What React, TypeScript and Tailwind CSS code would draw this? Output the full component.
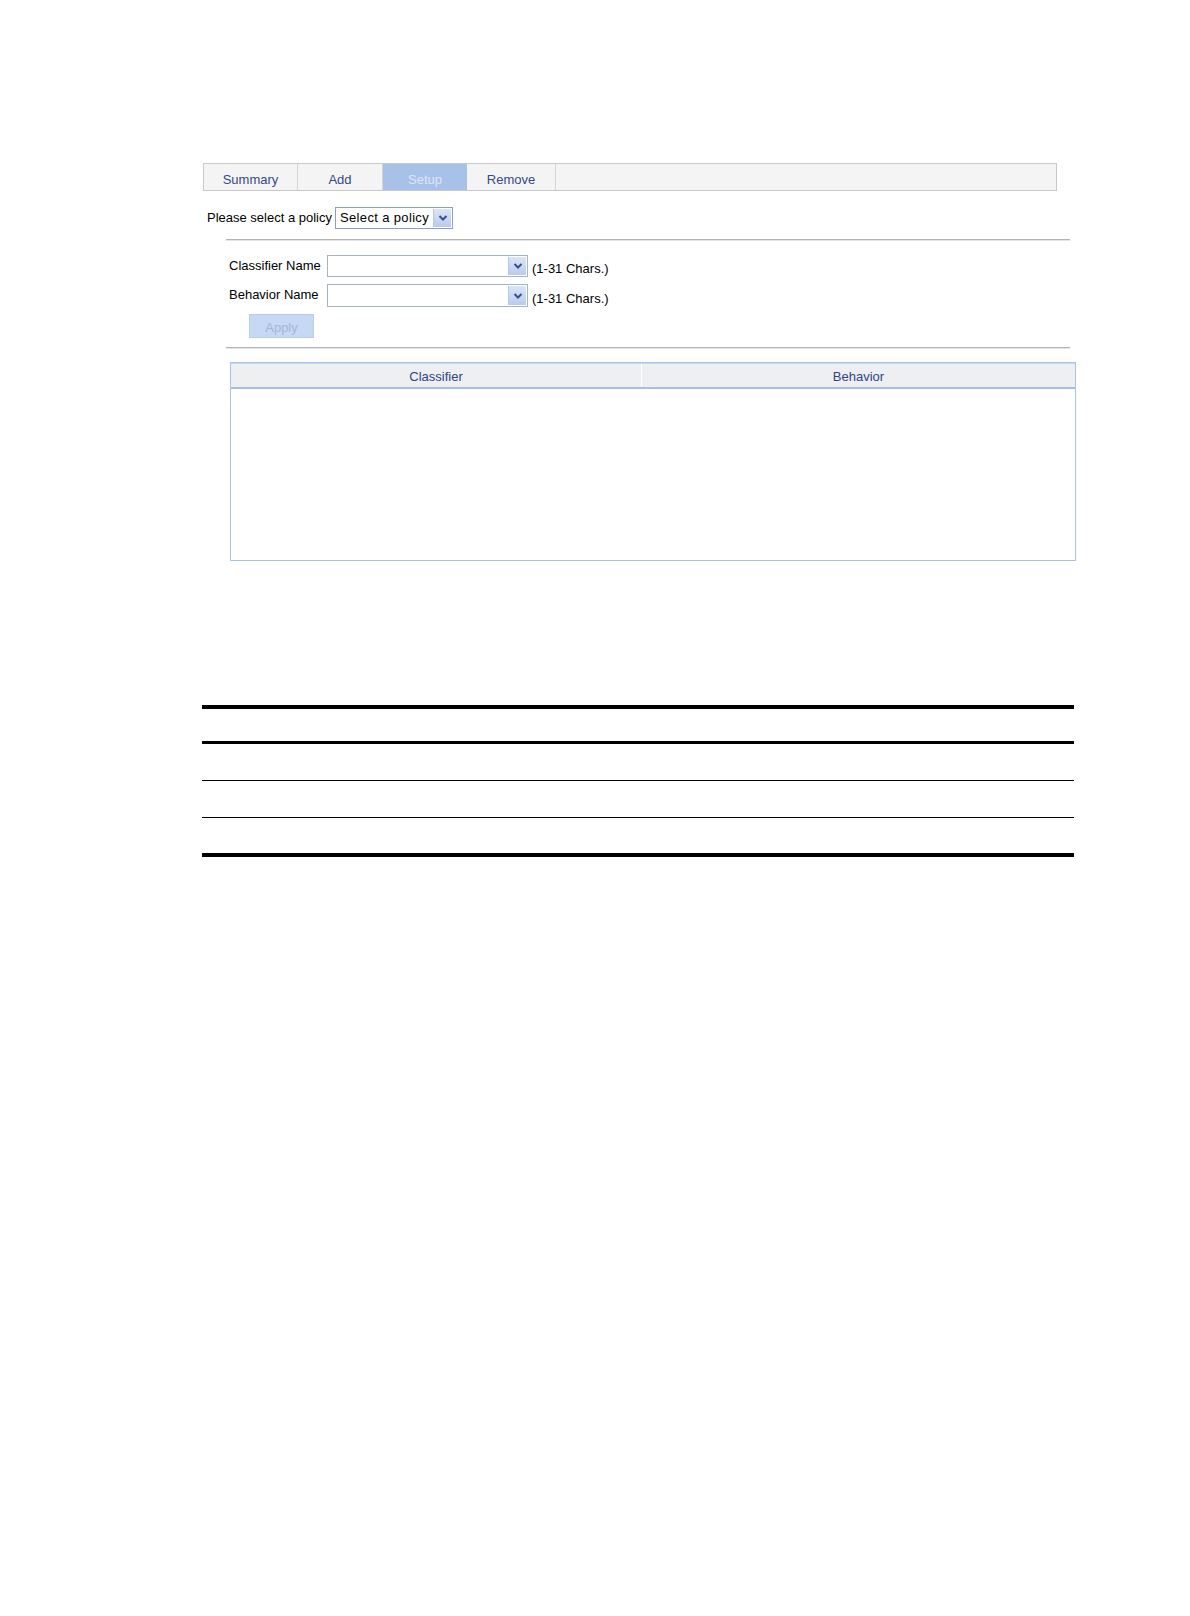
import React from "react";

function DropBtn() {
  return (
    <div className="w-[18px] h-full flex items-center justify-center bg-gradient-to-b from-[#dbe5f6] to-[#b9cbec] border-l border-[#b5c7e6]">
      <svg width="10" height="8" viewBox="0 0 10 8">
        <path d="M1.5 2 L5 5.5 L8.5 2" fill="none" stroke="#34508f" strokeWidth="2" />
      </svg>
    </div>
  );
}

export default function App() {
  const font = { fontFamily: '"Liberation Sans", Arial, sans-serif' };
  return (
    <div className="w-[1190px] h-[1616px] bg-white text-[13px] text-black" style={font}>
      <div className="pt-[163px] pl-[203px]">
        {/* Tab bar */}
        <div className="w-[854px] h-[28px] border border-[#c9c9c9] bg-[#f4f4f4] flex text-[#34498a] whitespace-nowrap">
          <div className="w-[94px] h-full border-r border-[#d4d4d4] flex items-end justify-center pb-[1px]">Summary</div>
          <div className="w-[85px] h-full border-r border-[#d4d4d4] flex items-end justify-center pb-[1px]">Add</div>
          <div className="w-[84px] h-full bg-[#a8c1e8] text-[#dde7f6] flex items-end justify-center pb-[1px]">Setup</div>
          <div className="w-[89px] h-full border-r border-[#d4d4d4] flex items-end justify-center pb-[1px]">Remove</div>
        </div>

        {/* Policy select */}
        <div className="mt-[16px] h-[22px] flex items-center whitespace-nowrap">
          <span className="ml-[4px] w-[128px]">Please select a policy</span>
          <div className="w-[118px] h-[22px] border border-[#8aa0c0] bg-white flex items-stretch">
            <span className="flex-1 pl-[4px] flex items-center text-[13px] tracking-[0.35px] whitespace-nowrap overflow-hidden">Select a policy</span>
            <div className="my-[1px] mr-[1px]"><DropBtn /></div>
          </div>
        </div>

        {/* Separator */}
        <div className="mt-[10px] ml-[23px] w-[844px] h-[2px] border-t border-[#b4b4b4] border-b border-b-[#e4e4e4]" />

        {/* Form */}
        <div className="ml-[26px] whitespace-nowrap">
          <div className="mt-[14px] h-[22px] flex items-center">
            <span className="w-[98px] -mt-[1px]">Classifier Name</span>
            <div className="w-[201px] h-[22px] border border-[#a5b3c8] bg-white flex justify-end p-[1px]">
              <DropBtn />
            </div>
            <span className="ml-[4px] mt-[5px]">(1-31 Chars.)</span>
          </div>
          <div className="mt-[7px] h-[23px] flex items-center">
            <span className="w-[98px] -mt-[1px]">Behavior Name</span>
            <div className="w-[201px] h-[23px] border border-[#a5b3c8] bg-white flex justify-end p-[1px]">
              <DropBtn />
            </div>
            <span className="ml-[4px] mt-[6px]">(1-31 Chars.)</span>
          </div>
          <div className="mt-[7px] ml-[20px] w-[65px] h-[24px] bg-[#c6d8f3] border border-[#b8cced] text-[#a3b6d6] flex items-end justify-center pb-0">
            Apply
          </div>
        </div>

        {/* Separator */}
        <div className="mt-[9px] ml-[23px] w-[844px] h-[2px] border-t border-[#b4b4b4] border-b border-b-[#e4e4e4]" />

        {/* Table */}
        <div className="mt-[13px] ml-[27px] w-[846px] h-[199px] border border-[#a9c3e6] bg-white">
          <div className="h-[26px] bg-[#eeeff1] border-t border-[#c9d8f0] border-b-2 border-b-[#a7bfe4] flex text-[#2f4489]">
            <div className="w-[411px] h-full border-r border-white flex items-center justify-center pt-[2px]">Classifier</div>
            <div className="flex-1 h-full flex items-center justify-center pt-[2px]">Behavior</div>
          </div>
        </div>

        {/* Lower rule table */}
        <div className="mt-[144px] -ml-[1px] w-[872px]">
          <div className="h-[4px] bg-black" />
          <div className="h-[32px]" />
          <div className="h-[3px] bg-black" />
          <div className="h-[36px]" />
          <div className="h-[1px] bg-black" />
          <div className="h-[36px]" />
          <div className="h-[1px] bg-black" />
          <div className="h-[35px]" />
          <div className="h-[4px] bg-black" />
        </div>
      </div>
    </div>
  );
}
